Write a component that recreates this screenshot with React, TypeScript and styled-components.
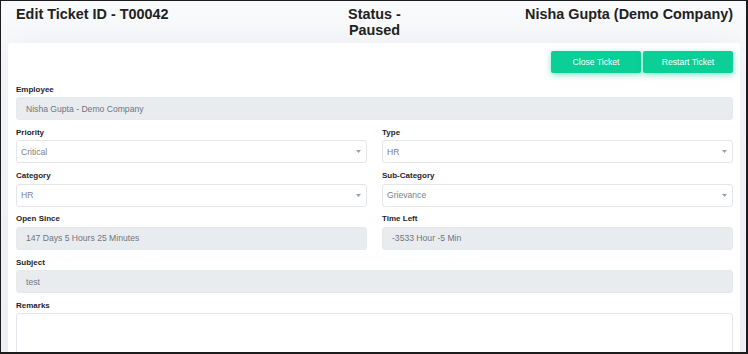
import React from 'react';
import styled, { createGlobalStyle } from 'styled-components';

const GlobalStyle = createGlobalStyle`
    html, body {
        margin: 0;
        padding: 0;
        overflow: hidden;
        font-family: 'Liberation Sans', Arial, sans-serif;
    }
`;

const fields = [
    { label: 'Priority', value: 'Critical', select: true },
    { label: 'Type', value: 'HR', select: true },
    { label: 'Category', value: 'HR', select: true },
    { label: 'Sub-Category', value: 'Grievance', select: true },
    { label: 'Open Since', value: '147 Days 5 Hours 25 Minutes', select: false },
    { label: 'Time Left', value: '-3533 Hour -5 Min', select: false },
];

const Caret = () => (
    <StyledCaret width="5" height="3" viewBox="0 0 5 3">
        <path d="M0 0 L5 0 L2.5 3 Z" fill="#9a9fa6" />
    </StyledCaret>
);

const App: React.FC = () => {
    return (
        <>
            <GlobalStyle />
            <Frame>
                <Header>
                    <Title>Edit Ticket ID - T00042</Title>
                    <Title $align="center">Status - Paused</Title>
                    <Title $align="right">Nisha Gupta (Demo Company)</Title>
                </Header>
                <Card>
                    <Actions>
                        <ActionButton>Close Ticket</ActionButton>
                        <ActionButton>Restart Ticket</ActionButton>
                    </Actions>
                    <Form>
                        <Field $full>
                            <Label>Employee</Label>
                            <Input disabled value="Nisha Gupta - Demo Company" readOnly />
                        </Field>
                        {fields.map((f) => (
                            <Field key={f.label}>
                                <Label>{f.label}</Label>
                                {f.select ? (
                                    <SelectWrap>
                                        <Select defaultValue={f.value}>
                                            <option>{f.value}</option>
                                        </Select>
                                        <Caret />
                                    </SelectWrap>
                                ) : (
                                    <Input disabled value={f.value} readOnly />
                                )}
                            </Field>
                        ))}
                        <Field $full>
                            <Label>Subject</Label>
                            <Input disabled value="test" readOnly />
                        </Field>
                        <Field $full>
                            <Label>Remarks</Label>
                            <TextArea />
                        </Field>
                    </Form>
                </Card>
            </Frame>
        </>
    );
};

export default App;

const Frame = styled.div`
    width: 748px;
    height: 354px;
    box-sizing: border-box;
    border: 1px solid #1c1c1c;
    border-right-width: 2px;
    border-bottom-width: 2px;
    background: linear-gradient(#f9fafc, #f3f5f9);
    padding: 0 6px 0 7px;
    overflow: hidden;
`;

const Header = styled.header`
    display: grid;
    grid-template-columns: 1fr 62px 1fr;
    padding: 5px 7px 5px 8px;
`;

const Title = styled.h4<{ $align?: string }>`
    margin: 0;
    font-size: 14.4px;
    line-height: 16px;
    font-weight: bold;
    color: #222;
    text-align: ${(p) => p.$align || 'left'};
`;

const Card = styled.section`
    background: #fff;
    border-radius: 3px;
    box-shadow: 0 0 35px 0 rgba(154, 161, 171, 0.15);
    padding: 8px 7px 8px 8px;
`;

const Actions = styled.div`
    display: flex;
    justify-content: flex-end;
    gap: 2px;
`;

const ActionButton = styled.button`
    width: 90px;
    height: 22px;
    border: none;
    border-radius: 2px;
    background: #0acf97;
    color: #fff;
    font-family: inherit;
    font-size: 8.6px;
    box-shadow: 0 2px 6px 0 rgba(10, 207, 151, 0.5);
    padding: 0;
`;

const Form = styled.div`
    display: grid;
    grid-template-columns: 1fr 1fr;
    column-gap: 15px;
    margin-top: 10.5px;
`;

const Field = styled.div<{ $full?: boolean }>`
    grid-column: ${(p) => (p.$full ? '1 / -1' : 'auto')};
    margin-bottom: 6.8px;
`;

const Label = styled.label`
    display: block;
    font-size: 8px;
    line-height: 12px;
    font-weight: bold;
    color: #1f2329;
    margin-bottom: 1.5px;
`;

const Input = styled.input`
    display: block;
    width: 100%;
    height: 23px;
    box-sizing: border-box;
    padding: 0 9px;
    border: 1px solid #e6e9ed;
    border-radius: 3px;
    background: #e9ecef;
    color: #6f757c;
    font-family: inherit;
    font-size: 8.6px;
    outline: none;
`;

const SelectWrap = styled.div`
    position: relative;
`;

const Select = styled.select`
    display: block;
    width: 100%;
    height: 23px;
    box-sizing: border-box;
    padding: 0 4px;
    border: 1px solid #e3e6ea;
    border-radius: 3px;
    background: #fff;
    color: #7c828a;
    font-family: inherit;
    font-size: 8.6px;
    appearance: none;
    -webkit-appearance: none;
    outline: none;
`;

const StyledCaret = styled.svg`
    position: absolute;
    right: 6px;
    top: 10px;
`;

const TextArea = styled.textarea`
    display: block;
    width: 100%;
    height: 60px;
    box-sizing: border-box;
    border: 1px solid #e3e6ea;
    border-radius: 3px;
    resize: none;
    outline: none;
`;
